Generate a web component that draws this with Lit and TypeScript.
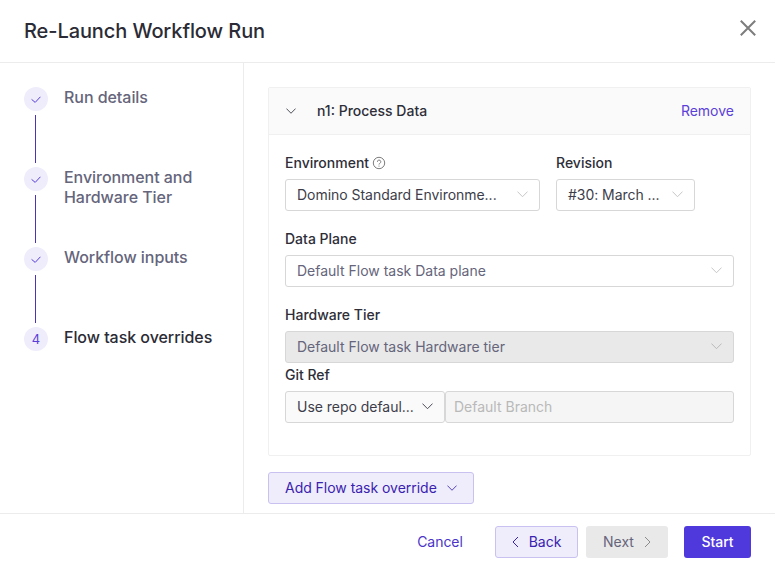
import { LitElement, html, css, svg } from "lit";
import { customElement } from "lit/decorators.js";

const chev = (cls: string) => html`<svg class=${cls} viewBox="0 0 12 7" fill="none" stroke="currentColor" stroke-width="1"><path d="M.5 .6 L6 6.2 L11.5 .6"/></svg>`;
const check = svg`<path d="M.6 3.4 L4.2 6.4 L9.4 .8" fill="none" stroke="#5a3fd9" stroke-width="1"/>`;

@customElement("app-root")
export class AppRoot extends LitElement {
  static styles = css`
    :host { display: flex; flex-direction: column; width: 775px; height: 570px; background: #fff; overflow: hidden; font-family: Inter, "Liberation Sans", sans-serif; color: #2e2e38; font-size: 14px; box-sizing: border-box; }
    * { box-sizing: border-box; }
    .head { height: 63px; flex: none; display: flex; align-items: center; justify-content: space-between; padding: 0 19px 0 24px; border-bottom: 1px solid #ececec; }
    .title { font-size: 20px; font-weight: 500; line-height: 28px; color: #2b2b35; letter-spacing: -0.09px; }
    .x { width: 16px; height: 16px; color: #7d7d7d; display: block; margin-top: -6px; }
    .main { flex: 1; display: flex; min-height: 0; }
    .side { width: 244px; flex: none; border-right: 1px solid #ececec; padding: 24px 24px 0; display: flex; flex-direction: column; }
    .step { height: 80px; display: flex; gap: 16px; position: relative; }
    .dot { width: 24px; height: 24px; flex: none; border-radius: 50%; background: #efedfb; display: flex; align-items: center; justify-content: center; color: #5a3fd9; font-size: 13px; }
    .dot svg { width: 10px; height: 7px; }
    .line { position: absolute; left: 11px; top: 28px; width: 1px; height: 48px; background: #4a35b8; }
    .lbl { font-size: 16px; font-weight: 500; line-height: 20px; color: #65657b; letter-spacing: -0.05px; }
    .lbl.cur { color: #2b2b35; }
    .content { flex: 1; padding: 24px 24px 0; min-width: 0; }
    .card { width: 483px; height: 369px; border: 1px solid #f0f0f0; border-radius: 2px; }
    .chead { height: 47px; background: #fafafa; border-bottom: 1px solid #f0f0f0; display: flex; align-items: center; padding: 0 16px 1px 17px; }
    .chead svg { width: 10px; height: 6px; color: #2e2e38; }
    .cname { font-weight: 500; margin-left: 21px; flex: 1; }
    .rm { color: #5a3fd9; }
    .body { padding: 20px 16px 0; display: flex; flex-direction: column; }
    .row { display: flex; gap: 16px; }
    label { display: flex; align-items: center; gap: 4px; font-weight: 500; line-height: 16px; height: 16px; color: #2e2e38; margin-bottom: 8px; }
    .q { width: 14px; height: 14px; color: #7d7d7d; margin-left: -1px; }
    .sel { height: 32px; border: 1px solid #d7d7d7; border-radius: 3px; background: #fff; display: flex; align-items: center; justify-content: space-between; padding: 0 11px 1px 11px; white-space: nowrap; color: #3d3d4a; letter-spacing: -0.03px; }
    .sel svg { width: 11px; height: 6.5px; color: #c2c2c2; flex: none; }
    .muted { color: #65657b; letter-spacing: 0; }
    .dis { background: #e9e9e9; }
    .dis svg { color: #b5b5b5; }
    .env { width: 255px; } .rev { width: 139px; letter-spacing: -0.05px; }
    .gap { margin-top: 20px; } .gap2 { margin-top: 4px; }
    .git { display: flex; gap: 0; }
    .gs { width: 160px; background: #fafafa; padding-right: 11px; }
    .gs svg { color: #3d3d4a; }
    .gi { flex: 1; background: #f5f5f5; color: #b9b9b9; justify-content: flex-start; padding-left: 8px; letter-spacing: 0; }
    .add { margin-top: 16px; height: 32px; width: 206px; background: #efedfb; border: 1px solid #c9c2f0; border-radius: 3px; color: #3a22b0; display: flex; align-items: center; padding: 0 16px 1px; gap: 10px; letter-spacing: -0.03px; }
    .add svg { width: 10px; height: 6px; margin-top: 1px; }
    .foot { height: 57px; flex: none; border-top: 1px solid #ececec; display: flex; align-items: center; padding: 0 24px 0 0; justify-content: flex-end; }
    .btn { height: 32px; border-radius: 3px; display: flex; align-items: center; justify-content: center; gap: 10px; border: 1px solid transparent; padding-bottom: 1px; }
    .btn svg { width: 7px; height: 12px; margin-top: 1px; }
    .cancel { width: 78px; color: #4a35c8; margin-right: 16px; letter-spacing: -0.03px; }
    .back { width: 83px; background: #efedfb; border-color: #c9c2f0; color: #3a22b0; margin-right: 8px; }
    .next { width: 82px; background: #e9e9e9; color: #65657b; margin-right: 16px; }
    .next svg { color: #8c8c8c; }
    .start { width: 67px; background: #5039dc; color: #fff; font-weight: 500; }
  `;
  render() {
    const steps = ["Run details", "Environment and Hardware Tier", "Workflow inputs"];
    return html`
      <div class="head">
        <div class="title">Re-Launch Workflow Run</div>
        <svg class="x" viewBox="0 0 16 16" fill="none" stroke="currentColor" stroke-width="2"><path d="M.8 .8 L15.2 15.2 M15.2 .8 L.8 15.2"/></svg>
      </div>
      <div class="main">
        <div class="side">
          ${steps.map((s) => html`<div class="step"><div class="dot"><svg viewBox="0 0 10 7">${check}</svg></div><div class="line"></div><div class="lbl">${s}</div></div>`)}
          <div class="step"><div class="dot">4</div><div class="lbl cur">Flow task overrides</div></div>
        </div>
        <div class="content">
          <div class="card">
            <div class="chead">${chev("")}<span class="cname">n1: Process Data</span><span class="rm">Remove</span></div>
            <div class="body">
              <div class="row">
                <div>
                  <label>Environment <svg class="q" viewBox="0 0 14 14" fill="none" stroke="currentColor" stroke-width="1"><circle cx="7" cy="7" r="5.7"/><path d="M5.4 5.8a1.7 1.7 0 1 1 2.4 1.5c-.5.3-.8.6-.8 1.2"/><path d="M7 9.6v1"/></svg></label>
                  <div class="sel env"><span>Domino Standard Environme...</span>${chev("")}</div>
                </div>
                <div>
                  <label>Revision</label>
                  <div class="sel rev"><span>#30: March ...</span>${chev("")}</div>
                </div>
              </div>
              <div class="gap">
                <label>Data Plane</label>
                <div class="sel muted"><span>Default Flow task Data plane</span>${chev("")}</div>
              </div>
              <div class="gap">
                <label>Hardware Tier</label>
                <div class="sel muted dis"><span>Default Flow task Hardware tier</span>${chev("")}</div>
              </div>
              <div class="gap2">
                <label>Git Ref</label>
                <div class="git">
                  <div class="sel gs"><span>Use repo defaul...</span>${chev("")}</div>
                  <div class="sel gi">Default Branch</div>
                </div>
              </div>
            </div>
          </div>
          <div class="add"><span>Add Flow task override</span>${chev("")}</div>
        </div>
      </div>
      <div class="foot">
        <div class="btn cancel">Cancel</div>
        <div class="btn back"><svg viewBox="0 0 7 12" fill="none" stroke="currentColor"><path d="M6 1 L1 6 L6 11"/></svg>Back</div>
        <div class="btn next">Next<svg viewBox="0 0 7 12" fill="none" stroke="currentColor"><path d="M1 1 L6 6 L1 11"/></svg></div>
        <div class="btn start">Start</div>
      </div>
    `;
  }
}
